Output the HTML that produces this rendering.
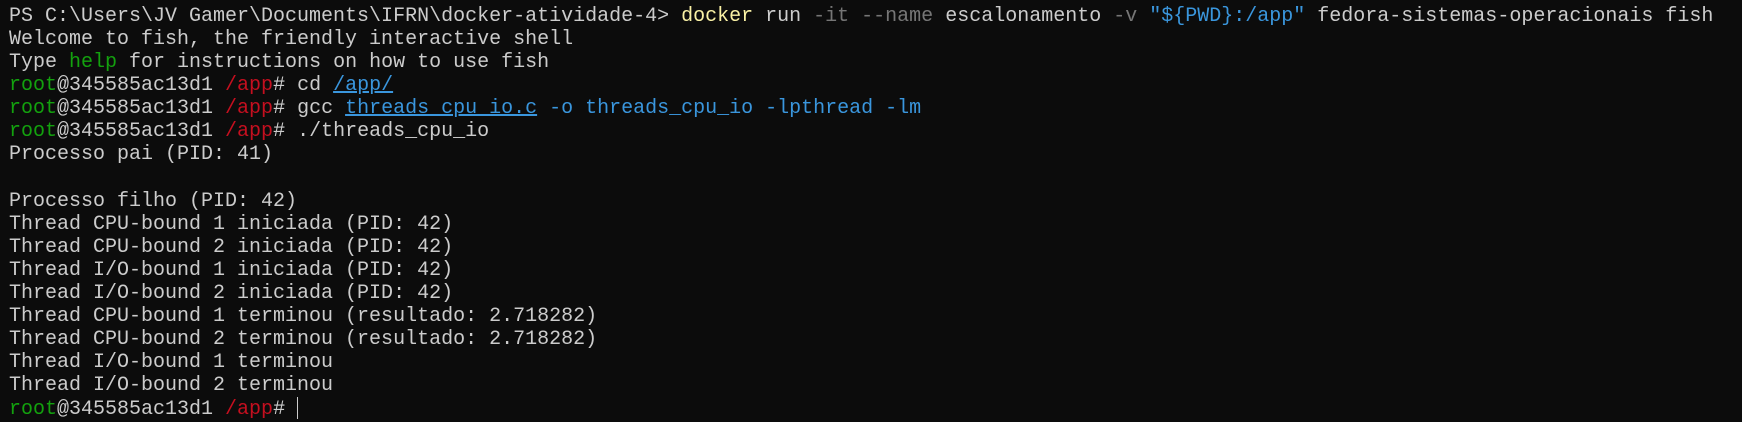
<!DOCTYPE html>
<html><head><style>
html,body{margin:0;padding:0;background:#0c0c0c;width:1742px;height:422px;overflow:hidden}
pre{margin:0;position:absolute;left:9px;top:5px;font-family:"Liberation Mono",monospace;font-size:20px;line-height:23.07px;color:#cccccc;white-space:pre}
.g{color:#13a10e}.r{color:#c50f1f}.b{color:#3b78ff}.u{text-decoration:underline}.y{color:#f9f1a5}.gr{color:#767676}.c{color:#3a96dd}
.cur{display:inline-block;width:1px;height:22px;background:#ccc;vertical-align:-5px}
</style></head><body>
<pre>PS C:\Users\JV Gamer\Documents\IFRN\docker-atividade-4&gt; <span class="y">docker</span> run <span class="gr">-it</span> <span class="gr">--name</span> escalonamento <span class="gr">-v</span> <span class="c">"${PWD}:/app"</span> fedora-sistemas-operacionais fish
Welcome to fish, the friendly interactive shell
Type <span class="g">help</span> for instructions on how to use fish
<span class="g">root</span>@345585ac13d1 <span class="r">/app</span># cd <span class="c u">/app/</span>
<span class="g">root</span>@345585ac13d1 <span class="r">/app</span># gcc <span class="c u">threads_cpu_io.c</span> <span class="c">-o threads_cpu_io -lpthread -lm</span>
<span class="g">root</span>@345585ac13d1 <span class="r">/app</span># ./threads_cpu_io
Processo pai (PID: 41)

Processo filho (PID: 42)
Thread CPU-bound 1 iniciada (PID: 42)
Thread CPU-bound 2 iniciada (PID: 42)
Thread I/O-bound 1 iniciada (PID: 42)
Thread I/O-bound 2 iniciada (PID: 42)
Thread CPU-bound 1 terminou (resultado: 2.718282)
Thread CPU-bound 2 terminou (resultado: 2.718282)
Thread I/O-bound 1 terminou
Thread I/O-bound 2 terminou
<span class="g">root</span>@345585ac13d1 <span class="r">/app</span># <span class="cur"></span></pre>
</body></html>
